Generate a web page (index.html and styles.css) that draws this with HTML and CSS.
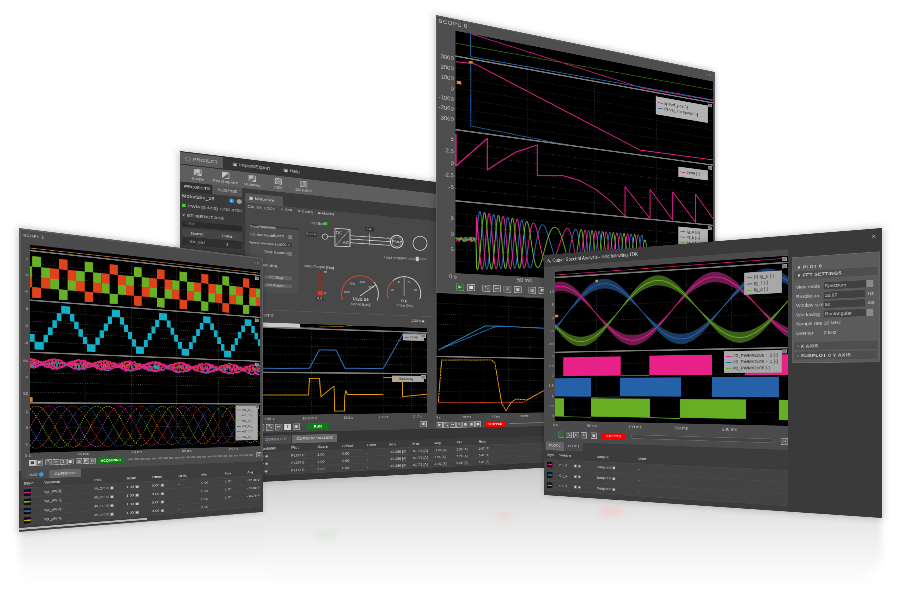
FILE: index.html
```html
<!DOCTYPE html>
<html lang="en">
<head>
<meta charset="utf-8">
<title>Scope windows</title>
<link rel="stylesheet" href="styles.css">
</head>
<body>
<main class="desk">
  <div class="glow"><div class="rf rf-a"></div><div class="rf rf-b"></div><div class="rf rf-d"></div><b class="spot spot-red1"></b><b class="spot spot-red2"></b><b class="spot spot-green"></b></div>

  <!-- back window: main application -->
  <section class="win win-b" data-quad="180,151 560,197 560,467 180,486">
    <nav class="b-menu"><span class="on">◯ PROJECT</span><span>▣ Import/Export</span><span>▣ Help</span></nav>
    <div class="b-ribbon">
      <span>▦<i>Scope</i></span><span>◩<i>Plot Graphics</i></span><span>▤<i>Variables</i></span><span>▧<i>CSV</i></span><span>▥<i>DB Editor</i></span>
    </div>
    <div class="b-body">
      <aside class="b-side">
        <div class="b-sidetabs"><span class="on">PROJECTS</span><span>SCOPES</span></div>
        <div class="b-proj"><b>MotorSim_18</b><em class="dot-i">i</em><em class="dot-g"></em></div>
        <div class="b-proj small"><em class="led"></em>PWM (0:42:0) <u>CNX a700</u></div>
        <div class="b-proj small">∨ ETHERNET ABS</div>
        <div class="b-filter">Filter</div>
        <div class="b-th"><span>Name</span><span>Data</span></div>
        <div class="b-th dark"><span>Xa_ctrl</span><span>1</span></div>
      </aside>
      <div class="b-main">
        <div class="b-tabs"><span>▣ MotorSim</span></div>
        <div class="b-tools"><span>CAL NK_LOOK</span><span>✓ Edit</span><span>⚙ Config</span><span>▶ Monitor</span></div>
        <div class="b-cols">
          <div class="b-left">
            <div class="b-control" data-plot="bc"><svg></svg></div>
            <div class="b-plottitle"><span>PLOT 0</span><span class="tiny">1:20.5 ▣</span></div>
            <div class="plots">
              <div class="row"><div class="yax"></div><div class="canvas" data-plot="b0"><svg></svg></div></div>
              <div class="row"><div class="yax"><i>20</i><i>10</i><i>0</i></div><div class="canvas" data-plot="b1"><svg></svg>
                <div class="legend lg-b1"><p><s class="c-blue"></s>Dem</p></div><b class="mini"></b></div></div>
              <div class="row"><div class="yax"><i>5</i><i>0</i><i>-5</i></div><div class="canvas" data-plot="b2"><svg></svg>
                <div class="legend lg-b2"><p><s class="c-amber"></s>Est.mag</p></div><b class="mini"></b></div></div>
            </div>
            <div class="axis"><span>13.08 s</span><span>13.505 s</span><span>13.6 s</span><span>13.8 s</span><span>14.0 s</span></div>
            <div class="tools"><b class="btn">▣</b><b class="btn">⤡</b><b class="btn">↔</b><b class="btn on">↕</b><b class="btn">▣</b><span class="st st-go">RUN</span><span class="grow"></span><b class="btn">▣</b></div>
          </div>
          <div class="b-right">
            <div class="plots">
              <div class="row"><div class="yax"></div><div class="canvas" data-plot="b3"><svg></svg></div></div>
              <div class="row"><div class="yax"></div><div class="canvas" data-plot="b4"><svg></svg></div></div>
            </div>
            <div class="axis"><span>4 s</span><span>20 ms</span><span>40 ms</span><span>60 ms</span><span>1 s</span></div>
            <div class="tools"><b class="btn">▶</b><b class="btn">⤡</b><b class="btn">↔</b><b class="btn">↕</b><b class="btn">▣</b><b class="btn">▣</b><b class="btn">▣</b><span class="st st-stop">STOPPED</span><span class="track"></span></div>
          </div>
        </div>
        <div class="b-table">
          <div class="tabs"><span>CONSOLE</span><span class="on">CURSOR VALUES</span></div>
          <div class="t-row head"><span>Variable</span><span>Plot</span><span>Scale</span><span>Offset</span><span>Units</span><span>Min</span><span>Max</span><span>Avg</span><span>Cur</span><span>Rms</span></div>
          <div class="t-row"><span>Ia ◉</span><span>PLOT 0</span><span>1.00</span><span>0.00</span><span>-</span><span>-10.286 [A]</span><span>10.771 [A]</span><span>-1.06 [A]</span><span>5.26 [A]</span><span>5.47 [A]</span></div>
          <div class="t-row"><span>Ib ◉</span><span>PLOT 0</span><span>1.00</span><span>0.00</span><span>-</span><span>-10.286 [A]</span><span>10.771 [A]</span><span>1.06 [A]</span><span>5.26 [A]</span><span>5.47 [A]</span></div>
          <div class="t-row"><span>Ic ◉</span><span>PLOT 0</span><span>1.00</span><span>0.00</span><span>-</span><span>-10.286 [A]</span><span>10.771 [A]</span><span>-0.01 [A]</span><span>5.26 [A]</span><span>5.47 [A]</span></div>
        </div>
      </div>
    </div>
  </section>

  <!-- top window: SCOPE 0 -->
  <section class="win win-c" data-quad="436,15 715,72 715,304 436,293">
    <header class="title">SCOPE 0<span class="winbtn">▫ ×</span></header>
    <div class="plots">
      <div class="row"><div class="yax"></div><div class="canvas" data-plot="c0"><svg></svg></div></div>
      <div class="row"><div class="yax tall y-c1"><i>3000</i><i>2000</i><i>1000</i><i>0</i><i>-1000</i><i>-2000</i><i>-3000</i></div><div class="canvas" data-plot="c1"><svg></svg>
        <div class="legend lg-c1"><p><s class="c-pink"></s>speed_pos [-]</p><p><s class="c-blue"></s>(f) Vel_lim speed [-]</p></div><b class="mini"></b></div></div>
      <div class="row"><div class="yax tall y-c2"><i>5</i><i>2.5</i><i>0</i><i>-2.5</i><i>-5</i></div><div class="canvas" data-plot="c2"><svg></svg>
        <div class="legend lg-c2"><p><s class="c-pink"></s>theta [-]</p></div><b class="mini"></b></div></div>
      <div class="row"><div class="yax tall y-c3"><i>5</i><i>0</i><i>-5</i></div><div class="canvas" data-plot="c3"><svg></svg>
        <div class="legend lg-c3"><p><s class="c-pink"></s>Ig_a [A]</p><p><s class="c-blue"></s>Ig_b [A]</p><p><s class="c-green"></s>Ig_c [A]</p></div><b class="mini"></b></div></div>
    </div>
    <div class="axis c-axis"><span>0 s</span><span>50 ms</span><span>100 ms</span></div>
    <div class="tools c-tools"><b class="btn gr">▶</b><b class="btn">■</b><b class="gap"></b><b class="btn">⤡</b><b class="btn">↔</b><b class="btn">↕</b><b class="btn">▣</b><b class="gap"></b><b class="btn">▥</b><b class="btn">◩</b></div>
  </section>

  <!-- left window: SCOPE 1 -->
  <section class="win win-a" data-quad="19,228 263,258 263,512 19,532">
    <header class="title">SCOPE 1<span class="winbtn">▫ ×</span></header>
    <div class="plots">
      <div class="row"><div class="yax"></div><div class="canvas" data-plot="a0"><svg></svg></div></div>
      <div class="row"><div class="yax"><i>1</i><i>0</i><i>-1</i></div><div class="canvas" data-plot="a1"><svg></svg><b class="mini"></b></div></div>
      <div class="row"><div class="yax"><i>5</i><i>0</i><i>-5</i></div><div class="canvas" data-plot="a2"><svg></svg><b class="mini"></b></div></div>
      <div class="row"><div class="yax"><i>50</i><i>0</i><i>-50</i></div><div class="canvas" data-plot="a3"><svg></svg><b class="mini"></b></div></div>
      <div class="row"><div class="yax"><i>1</i><i>0</i><i>-1</i></div><div class="canvas" data-plot="a4"><svg></svg>
        <div class="legend lg-a4"><p><s class="c-pink"></s>xe1_0 [-]</p><p><s class="c-amber"></s>xe1_1 [-]</p><p><s class="c-green"></s>xe1_2 [-]</p><p><s class="c-blue"></s>xe2_0 [-]</p><p><s class="c-red"></s>xe2_1 [-]</p><p><s class="c-purple"></s>xe2_2 [-]</p></div><b class="mini"></b></div></div>
    </div>
    <div class="axis a-axis"><span>0 s</span><span>20 ms</span><span>40 ms</span><span>60 ms</span><span>80 ms</span></div>
    <div class="tools a-tools"><b class="btn on">■</b><b class="btn">◩</b><b class="gap"></b><b class="btn">⤡</b><b class="btn">↔</b><b class="btn">↕</b><b class="btn">▣</b><b class="gap"></b><b class="btn">▥</b><b class="btn">◩</b><b class="btn">▤</b><span class="st st-run">ACQUIRING</span><span class="dash"></span><b class="btn">↥</b></div>
    <div class="a-table">
      <div class="tabs"><span>TIME <em class="dot-i">i</em></span><span class="on">CURSORS</span></div>
      <div class="t-row head"><span>Style</span><span>Variable</span><span>Plot</span><span>Scale</span><span>Offset</span><span>Units</span><span>Min</span><span>Max</span><span>Avg</span></div>
      <div class="t-row"><span><s class="swatch c-pink"></s></span><span>vp_ph[0]</span><span>PLOT 0 ▣</span><span>1.00 ▣</span><span>0.00 ▣</span><span>-</span><span>0.00</span><span>1.00</span><span>-12.3e-6</span></div>
      <div class="t-row"><span><s class="swatch c-green"></s></span><span>vp_ph[1]</span><span>PLOT 0 ▣</span><span>1.00 ▣</span><span>0.00 ▣</span><span>-</span><span>0.00</span><span>1.00</span><span>-32.5e-6</span></div>
      <div class="t-row"><span><s class="swatch c-blue"></s></span><span>vp_ph[2]</span><span>PLOT 0 ▣</span><span>1.00 ▣</span><span>0.00 ▣</span><span>-</span><span>0.00</span><span>1.00</span><span>-12.7e-6</span></div>
      <div class="t-row"><span><s class="swatch c-amber"></s></span><span>vp_ph[3]</span><span>PLOT 0 ▣</span><span>1.00 ▣</span><span>0.00 ▣</span><span>-</span><span>0.00</span><span></span><span></span></div>
      <div class="a-scroll"></div>
    </div>
  </section>

  <!-- right window: spectral analysis -->
  <section class="win win-d" data-quad="544,255 882,228 882,518 544,495">
    <div class="d-title"><svg class="logo" viewBox="0 0 12 12"><path d="M1 11 5 2l3 6 1-2 2 5" fill="none" stroke="#d9d9d9" stroke-width="1.4"/><path d="M1 11 5 2" stroke="#e23a3a" stroke-width="1.6"/></svg>Output Spectral Analysis - Grid following.TDK<span class="winbtn">×</span></div>
    <div class="d-cols">
      <div class="d-left">
        <div class="plots">
          <div class="row"><div class="yax"></div><div class="canvas" data-plot="d0"><svg></svg><b class="mini"></b></div></div>
          <div class="row"><div class="yax tall y-d1"><i>10</i><i>5</i><i>0</i><i>-5</i><i>-10</i></div><div class="canvas" data-plot="d1"><svg></svg>
            <div class="legend lg-d1"><p><s class="c-pink"></s>(f) Ig_0 [-]</p><p><s class="c-blue"></s>Ig_1 [-]</p><p><s class="c-green"></s>Ig_2 [-]</p></div><b class="mini"></b></div></div>
          <div class="row"><div class="yax tall y-d2"><i>3</i><i>2.5</i><i>2</i><i>1.5</i><i>1</i><i>0.5</i><i>0</i></div><div class="canvas" data-plot="d2"><svg></svg>
            <div class="legend lg-d2"><p><s class="c-pink"></s>#0_PWM#2c09 + 2 [-]</p><p><s class="c-blue"></s>#0_PWM#2c09 + 1 [-]</p><p><s class="c-green"></s>#0_PWM#2c09 [-]</p></div><b class="mini"></b></div></div>
        </div>
        <div class="axis d-axis"><span>0 s</span><span>50 ms</span><span>100 ms</span><span>150 ms</span><span>200 ms</span></div>
        <div class="tools d-tools"><b class="btn gr"></b><b class="btn">⤡</b><b class="btn">↔</b><b class="btn">↕</b><b class="gap"></b><b class="btn">▣</b><span class="st st-stop">STOPPED</span><span class="track long"></span><b class="btn">→</b></div>
        <div class="d-table">
          <div class="tabs"><span class="on">PLOT 0</span><span>PLOT 1</span></div>
          <div class="t-row head"><span>Style</span><span>Variable</span><span>Subplot</span><span>Units</span></div>
          <div class="t-row"><span><s class="swatch c-pink"></s></span><span>Ch_0 &nbsp; &nbsp; &nbsp; ▣ ◉</span><span>Subplot 0 ▣</span><span>-</span></div>
          <div class="t-row"><span><s class="swatch c-blue"></s></span><span>Ch_1 &nbsp; &nbsp; &nbsp; ▣ ◉</span><span>Subplot 0 ▣</span><span>-</span></div>
          <div class="t-row"><span><s class="swatch c-green"></s></span><span>Ch_2 &nbsp; &nbsp; &nbsp; ▣ ◉</span><span>Subplot 0 ▣</span><span>-</span></div>
        </div>
      </div>
      <aside class="d-panel">
        <div class="d-card">
          <div class="d-h">∨ PLOT 0</div>
          <div class="d-h sub">∨ FFT SETTINGS</div>
          <div class="d-f"><label>View mode</label><span class="fld sel">Spectrum</span></div>
          <div class="d-f"><label>Resolution</label><span class="fld">16.67</span><em>Hz</em></div>
          <div class="d-f"><label>Window size</label><span class="fld">50</span><em>ms</em></div>
          <div class="d-f"><label>Windowing</label><span class="fld sel">Rectangular</span></div>
          <div class="d-f"><label>Sample rate</label><span>10 MHz</span></div>
          <div class="d-f"><label>Overlap</label><span>2 kHz</span></div>
          <div class="d-h sub gapped">› X AXIS</div>
          <div class="d-h sub">› SUBPLOT 0 Y AXIS</div>
        </div>
      </aside>
    </div>
  </section>
</main>
<script src="app.js"></script>
</body>
</html>
```

FILE: styles.css
```css
* { box-sizing: border-box; margin: 0; padding: 0; }
html, body { background: #fff; }
body { width: 900px; height: 603px; overflow: hidden; font-family: "Liberation Sans", Arial, sans-serif; }
.desk { position: relative; width: 900px; height: 603px; overflow: hidden; }

/* floor reflection */
.glow { position: absolute; inset: 0; filter: blur(3px); }
.rf { position: absolute; inset: 0; }
.rf-a { clip-path: polygon(19px 530px, 263px 510px, 263px 590px, 19px 590px); background: linear-gradient(#e6e6e6 525px, #f1f1f1 550px, #fbfbfb 570px, #fff 585px); }
.rf-b { clip-path: polygon(263px 480px, 545px 467px, 545px 600px, 263px 600px); background: linear-gradient(#cfcfcf 478px, #e4e4e4 515px, #f5f5f5 555px, #fff 590px); }
.rf-d { clip-path: polygon(544px 493px, 882px 516px, 882px 560px, 850px 600px, 544px 600px); background: linear-gradient(#dcdcdc 500px, #ebebeb 530px, #f8f8f8 565px, #fff 590px); }
.spot { position: absolute; display: block; height: 7px; }
.spot-red1 { left: 498px; top: 513px; width: 12px; background: #ecd6d6; }
.spot-red2 { left: 600px; top: 507px; width: 22px; height: 9px; background: #f0d0d0; }
.spot-green { left: 315px; top: 531px; width: 22px; background: #dde8da; }

/* windows on the free canvas: flat layout, projected by data-quad */
.win { position: absolute; left: 0; top: 0; transform-origin: 0 0; color: #cfcfcf; font-size: 9px; overflow: hidden; box-shadow: 0 0 14px rgba(0,0,0,.3); filter: blur(.45px); }
.win-a { width: 500px; height: 620px; background: #4b4b4b; outline: 3px solid #5d5d5d; outline-offset: -3px; }
.win-b { width: 760px; height: 640px; background: #3a3a3a; display: flex; flex-direction: column; }
.win-c { width: 560px; height: 560px; background: #4e4e4e; outline: 2px solid #5a5a5a; outline-offset: -2px; }
.win-d { width: 700px; height: 560px; background: #3a3a3a; display: flex; flex-direction: column; }

.title { height: 28px; padding: 9px 0 0 7px; font-size: 8px; letter-spacing: .3px; color: #d5d5d5; display: flex; justify-content: space-between; }
.win-c .title { height: 24px; padding: 5px 0 0 4px; font-size: 10px; letter-spacing: 1px; }
.winbtn { color: #999; padding-right: 10px; font-size: 9px; letter-spacing: 0; }

/* plots */
.plots { display: grid; gap: 3px; }
.row { display: flex; min-height: 0; }
.yax { display: flex; flex-direction: column; justify-content: space-around; align-items: flex-end; padding-right: 3px; font-size: 8px; color: #c6c6c6; }
.yax i { font-style: normal; line-height: 1; }
.yax.tall { justify-content: space-between; }
.canvas { position: relative; flex: 1; background: #000; box-shadow: 0 3px 0 #7a7a7a; overflow: hidden; }
.row:last-child .canvas { box-shadow: none; }
.canvas svg, .b-control svg { display: block; width: 100%; height: 100%; }
.mini { position: absolute; right: 2px; top: 2px; width: 10px; height: 8px; background: #777; border: 1px solid #aaa; }

.win-a .plots { grid-template-rows: 11px 99px 104px 101px 101px; margin: 3px 7px 0 0; }
.win-a .yax { width: 19px; }
.win-c .plots { grid-template-rows: 50px 147px 142px 146px; margin-right: 5px; }
.win-c .yax { width: 33px; font-size: 10px; }
.y-c1 { padding: 0 3px 13px 0; }
.y-c2 { padding: 14px 3px 20px 0; }
.y-c3 { padding: 30px 3px 42px 0; }
.win-d .plots { grid-template-rows: 12px 170px 157px; }
.win-d .yax { width: 27px; font-size: 9px; }
.y-d1 { padding: 27px 3px 13px 0; }
.y-d2 { padding: 3px 3px 6px 0; }

/* legends */
.legend { position: absolute; background: #b2b2b2; color: #2c2c2c; font-size: 9px; padding: 3px 12px 2px 4px; border: 1px solid #999; overflow: hidden; }
.legend p { display: flex; align-items: center; gap: 3px; white-space: nowrap; line-height: 13px; }
.legend s { display: block; width: 11px; height: 2px; flex: none; }
.c-pink { background: #e91e8c; } .c-blue { background: #2568b4; } .c-green { background: #6ab023; }
.c-amber { background: #e8a000; } .c-red { background: #e0431c; } .c-purple { background: #8a5bb0; }
.lg-a4 { right: 6px; top: 2px; width: 53px; height: 84px; padding: 3px 1px 0 3px; font-size: 7px; background: #a9a9a9; }
.lg-a4 s { width: 8px; }
.lg-c1 { right: 12px; top: 7px; width: 120px; height: 42px; padding-top: 6px; }
.lg-c2 { right: 12px; top: 13px; width: 69px; height: 24px; padding-top: 4px; }
.lg-c3 { right: 12px; top: 9px; width: 69px; height: 46px; }
.lg-d1 { right: 12px; top: 14px; width: 73px; height: 46px; background: #a8a8a8; }
.lg-d2 { right: 12px; top: 3px; width: 114px; height: 46px; background: #a8a8a8; }
.lg-b1 { right: 6px; top: 3px; width: 44px; height: 14px; padding: 0 3px; background: #a8a8a8; font-size: 8px; }
.lg-b2 { right: 6px; top: 3px; width: 66px; height: 14px; padding: 0 3px; background: #a8a8a8; font-size: 8px; }
.lg-b1 p, .lg-b2 p { line-height: 12px; }
.lg-b1 s, .lg-b2 s { width: 8px; }

/* axis + toolbars */
.axis { display: flex; justify-content: space-between; font-size: 8px; color: #c4c4c4; }
.a-axis { height: 12px; padding: 1px 60px 0 10px; }
.c-axis { height: 16px; padding: 2px 250px 0 22px; font-size: 10px; }
.d-axis { height: 21px; padding: 5px 100px 0 22px; font-size: 9px; }
.tools { display: flex; align-items: center; gap: 1px; }
.btn { flex: none; display: flex; align-items: center; justify-content: center; width: 13px; height: 13px; border: 1px solid #b8b8b8; background: #5f5f5f; color: #ddd; font-size: 8px; font-weight: 400; font-family: "DejaVu Sans", sans-serif; line-height: 1; }
.btn.on { background: #d5d5d5; color: #444; }
.btn.gr { border-color: #4caf50; background: #3f5f42; color: #9fdc9f; }
.gap { flex: none; width: 8px; }
.grow { flex: 1; }
.st { flex: none; display: flex; align-items: center; justify-content: center; font-size: 7px; font-weight: 700; color: #fff; }
.st-run { width: 52px; height: 13px; margin: 0 7px 0 2px; background: #0c7d12; }
.st-go { width: 40px; height: 12px; margin-left: 10px; background: #0c7d12; }
.st-stop { width: 46px; height: 13px; margin-left: 8px; background: #f40000; }
.dash { flex: 1; height: 4px; margin-right: 5px; background: repeating-linear-gradient(90deg, #777 0 9px, #4b4b4b 9px 12px); }
.track { flex: 1; height: 2px; margin: 0 8px; background: #777; }
.track.long { height: 9px; background: #444; border: 1px solid #6a6a6a; border-radius: 4px; }
.a-tools { height: 18px; padding-left: 17px; padding-right: 4px; }
.a-tools .btn { width: 12px; height: 12px; }
.a-tools .gap { width: 2px; }
.c-tools { height: 24px; padding-left: 34px; gap: 5px; }
.c-tools .btn { width: 14px; height: 14px; }
.c-tools .gap { width: 3px; }
.d-tools { height: 21px; padding-left: 36px; gap: 4px; }
.d-tools .btn { width: 14px; height: 14px; }
.d-tools .gap { width: 2px; }
.d-tools .st-stop { width: 56px; height: 14px; margin-left: 7px; }

/* tabular parts */
.tabs { display: flex; gap: 1px; font-size: 8px; }
.tabs span { padding: 4px 9px; background: #4a4a4a; color: #bbb; border-radius: 2px 2px 0 0; }
.tabs .on { background: #666; color: #e2e2e2; }
.t-row { display: grid; align-items: center; font-size: 8px; white-space: nowrap; color: #cfcfcf; border-bottom: 1px solid #4a4a4a; }
.t-row.head { color: #e0e0e0; background: #454545; }
.swatch { display: block; width: 13px; height: 13px; border-style: solid; border-color: #111; border-width: 5px 1px; }
.a-table { margin-top: 7px; background: #3d3d3d; height: 123px; padding: 0 4px; position: relative; }
.a-table .t-row { grid-template-columns: 36px 92px 62px 52px 56px 50px 53px 53px 60px; height: 19px; padding-left: 4px; background: #424242; }
.a-table .t-row.head { height: 18px; background: #3d3d3d; }
.dot-i { display: inline-block; width: 9px; height: 9px; border-radius: 50%; background: #2f8fd8; color: #fff; font-size: 7px; text-align: center; line-height: 9px; font-style: normal; }
.dot-g { display: inline-block; width: 9px; height: 9px; border-radius: 50%; background: #999; }
.a-scroll { position: absolute; left: 0; bottom: 3px; width: 240px; height: 4px; background: #b5b5b5; }

/* back window */
.b-menu { height: 26px; flex: none; display: flex; align-items: center; gap: 8px; background: #333; font-size: 9px; color: #c4c4c4; }
.b-menu span { padding: 6px 8px; }
.b-menu .on { background: #5c5c5c; }
.b-ribbon { height: 32px; flex: none; display: flex; background: #5e5e5e; color: #c8c8c8; padding-left: 6px; }
.b-ribbon span { width: 46px; display: flex; flex-direction: column; align-items: center; font-family: "DejaVu Sans", sans-serif; font-size: 16px; line-height: 19px; }
.b-ribbon i { font: 7px/10px "Liberation Sans", sans-serif; white-space: nowrap; }
.b-body { flex: 1; display: flex; min-height: 0; }
.b-side { width: 106px; flex: none; padding: 0 3px; background: #3a3a3a; font-size: 8px; }
.b-sidetabs { display: flex; height: 18px; }
.b-sidetabs span { flex: 1; text-align: center; line-height: 18px; background: #555; }
.b-sidetabs .on { background: #2f2f2f; color: #eee; }
.b-proj { display: flex; gap: 4px; align-items: center; height: 18px; white-space: nowrap; }
.b-proj b { font-weight: 400; font-size: 9px; margin-right: auto; color: #e2e2e2; }
.b-proj u { text-decoration: none; color: #bbb; }
.led { width: 6px; height: 6px; background: #46c83c; }
.b-filter { height: 11px; margin: 3px 0; padding-left: 6px; background: #2b2b2b; color: #777; font-size: 7px; }
.b-th { display: grid; grid-template-columns: 1fr 1fr; height: 16px; align-items: center; background: #444; text-align: center; }
.b-th.dark { background: #2f2f2f; }
.b-main { flex: 1; min-width: 0; padding: 9px 0 0 3px; display: flex; flex-direction: column; background: #3a3a3a; }
.b-tabs { height: 19px; display: flex; }
.b-tabs span { padding: 5px 16px 0 6px; background: #565656; color: #ddd; font-size: 8px; }
.b-tools { height: 14px; display: flex; gap: 10px; padding-left: 4px; font-size: 7px; color: #c4c4c4; background: #484848; align-items: center; }
.b-cols { display: flex; flex: none; height: 442px; background: #484848; }
.b-left { width: 358px; display: flex; flex-direction: column; flex: none; }
.b-control { height: 196px; flex: none; }
.b-plottitle { display: flex; justify-content: space-between; height: 26px; padding: 6px 16px 0 22px; font-size: 8px; border-top: 1px solid #5a5a5a; }
.tiny { font-size: 7px; }
.b-left .plots { grid-template-rows: 8px 87px 84px; }
.b-left .yax { width: 21px; font-size: 7px; }
.b-left .plots, .b-left .axis, .b-left .tools { margin-right: 12px; }
.b-left .axis { height: 16px; padding: 4px 10px 0 28px; font-size: 7px; }
.b-left .tools { height: 16px; padding-left: 20px; gap: 3px; }
.b-right { flex: 1; padding-top: 143px; }
.b-right .plots { grid-template-rows: 139px 125px; }
.b-right .yax { width: 9px; }
.b-right .axis { height: 16px; padding: 4px 20px 0 8px; font-size: 7px; }
.b-right .tools { height: 16px; padding-left: 9px; }
.b-table { flex: 1; padding-top: 6px; background: #353535; }
.b-table .tabs { padding-left: 26px; height: 17px; }
.b-table .tabs span { padding: 3px 8px; }
.b-table .t-row { grid-template-columns: 55px 48px 47px 48px 45px 47px 46px 48px 49px 60px; height: 15px; padding-left: 26px; background: #424242; font-size: 7px; }
.b-table .t-row.head { height: 17px; background: #3b3b3b; font-size: 8px; }

/* right window */
.d-title { height: 28px; flex: none; display: flex; align-items: center; gap: 4px; padding-left: 6px; color: #d9d9d9; font-size: 10px; }
.logo { width: 11px; height: 11px; }
.d-title .winbtn { margin-left: auto; color: #aaa; font-size: 15px; }
.d-cols { flex: 1; display: flex; min-height: 0; }
.d-left { width: 531px; flex: none; background: #4b4b4b; padding-top: 13px; display: flex; flex-direction: column; }
.d-table { margin-top: 7px; flex: 1; background: #3c3c3c; }
.d-table .tabs { height: 20px; padding-left: 4px; }
.d-table .t-row { grid-template-columns: 30px 90px 95px 60px; height: 24px; padding-left: 8px; background: #434343; }
.d-table .t-row.head { height: 22px; background: #3c3c3c; }
.d-panel { flex: 1; padding: 17px 4px 0 7px; }
.d-card { height: 214px; background: #5b5b5b; padding: 12px 3px 4px; border: 1px solid #707070; }
.d-h { height: 16px; font-size: 9px; font-weight: 700; letter-spacing: .6px; padding: 3px 0 0 6px; color: #d0d0d0; white-space: nowrap; }
.d-h.sub { background: #4e4e4e; margin-bottom: 3px; }
.d-h.sub:nth-child(2) { margin-bottom: 7px; }
.d-h.gapped { margin-top: 9px; }
.d-f { display: flex; align-items: center; height: 18.5px; font-size: 9px; padding-left: 4px; white-space: nowrap; }
.d-f label { width: 51px; flex: none; }
.fld { width: 74px; height: 14px; background: #404040; padding-left: 2px; line-height: 14px; }
.fld.sel { width: 88px; background: linear-gradient(90deg, #404040 76px, #8a8a8a 76px); }
.d-f em { font-style: normal; margin-left: 4px; }
```

FILE: app.js
```js
/* Projects each flat window on its quad, then draws its curves. Points are traced in reference pixels and mapped back through the projection. */
function projection(win) {
  const W = win.offsetWidth, H = win.offsetHeight;
  const q = win.dataset.quad.split(' ').map(s => s.split(',').map(Number));
  const [[x0, y0], [x1, y1], [x2, y2], [x3, y3]] = q;
  const dx1 = x1 - x2, dx2 = x3 - x2, sx = x0 - x1 + x2 - x3;
  const dy1 = y1 - y2, dy2 = y3 - y2, sy = y0 - y1 + y2 - y3;
  const den = dx1 * dy2 - dx2 * dy1;
  const g = (sx * dy2 - dx2 * sy) / den, h = (dx1 * sy - sx * dy1) / den;
  const a = x1 - x0 + g * x1, b = x3 - x0 + h * x3, d = y1 - y0 + g * y1, e = y3 - y0 + h * y3;
  win.style.transform = `matrix3d(${a / W},${d / W},0,${g / W},${b / H},${e / H},0,${h / H},0,0,1,0,${x0},${y0},0,1)`;
  win.inv = (x, y) => {
    const A = a - g * x, B = b - h * x, C = x - x0, D = d - g * y, E = e - h * y, F = y - y0;
    const det = A * E - B * D;
    return [W * (C * E - B * F) / det, H * (A * F - C * D) / det];
  };
}
document.querySelectorAll('.win').forEach(projection);

const NS = 'http://www.w3.org/2000/svg';
function chart(id, bx, by) {
  const box = document.querySelector(`[data-plot="${id}"]`);
  const win = box.closest('.win'), svg = box.querySelector('svg');
  let ox = 0, oy = 0, el = box;
  while (el !== win) { ox += el.offsetLeft; oy += el.offsetTop; el = el.offsetParent; }
  svg.setAttribute('viewBox', `${ox} ${oy} ${box.offsetWidth} ${box.offsetHeight}`);
  svg.setAttribute('preserveAspectRatio', 'none');
  const add = (tag, attrs, txt) => {
    const n = document.createElementNS(NS, tag);
    for (const k in attrs) n.setAttribute(k, attrs[k]);
    if (txt) n.textContent = txt;
    svg.appendChild(n);
    return n;
  };
  const c = {
    ox, oy, w: box.offsetWidth, h: box.offsetHeight, add,
    p: (x, y) => win.inv(bx + x / 3, by + y / 3),
    flat(pts, color, width = 1.2, dash) {
      const attrs = { points: pts.map(q => q[0].toFixed(1) + ',' + q[1].toFixed(1)).join(' '), fill: 'none', stroke: color, 'stroke-width': width, 'stroke-linejoin': 'round' };
      if (dash) attrs['stroke-dasharray'] = dash;
      return add('polyline', attrs);
    },
    line(pts, color, width, dash) { return c.flat(pts.map(q => c.p(q[0], q[1])), color, width, dash); },
    fill(pts, color) { return add('polygon', { points: pts.map(q => q[0].toFixed(1) + ',' + q[1].toFixed(1)).join(' '), fill: color }); },
    rect(x0, y0, x1, y1, color) {
      const a = c.p(x0, y0), b = c.p(x1, y1);
      return add('rect', { x: a[0], y: a[1], width: b[0] - a[0], height: b[1] - a[1], fill: color });
    },
    text(x, y, str, size = 8, color = '#cfcfcf', anchor = 'middle') {
      const q = c.p(x, y);
      return add('text', { x: q[0], y: q[1], 'font-size': size, fill: color, 'text-anchor': anchor, 'font-family': 'Liberation Sans, sans-serif' }, str);
    },
    grid(vx, hn, color = '#575757') {
      vx.forEach(x => { const X = c.p(x, 300)[0]; c.flat([[X, oy], [X, oy + c.h]], color, 1.2, '1.5 3'); });
      for (let i = 1; i <= hn; i++) { const Y = oy + c.h * i / (hn + 1); c.flat([[ox, Y], [ox + c.w, Y]], color, 1.2, '1.5 3'); }
    }
  };
  return c;
}
let seed = 7;
const rnd = () => { seed = (seed * 1664525 + 1013904223) % 4294967296; return seed / 4294967296; };
const PINK = '#e91e8c', BLUE = '#2568b4', GREEN = '#6ab023', AMBER = '#e8a000', RED = '#e0431c', CYAN = '#13b1c9', PURPLE = '#8a5bb0';

/* ---- SCOPE 1 (zoom base 0,220) ---- */
(function () {
  const a0 = chart('a0', 0, 220);
  a0.line([[90, 73], [785, 150]], PINK, 1.2);
  a0.line([[90, 84], [785, 160]], '#c98a2c', 1.2);

  const a1 = chart('a1', 0, 220);
  a1.grid([255, 395, 530, 655], 3);
  const x0 = a1.p(96, 150)[0], x4 = a1.p(667, 150)[0], col = (x4 - x0) / 24;
  const yT = a1.p(96, 108)[1], rh = (a1.p(96, 232)[1] - yT) / 4;
  const green = [0, 1, 2, 3, 2, 1], red = [3, 2, 1, 0, 1, 2];
  for (let i = -1; i < 32; i++) {
    const k = ((i % 6) + 6) % 6, x = x0 + i * col;
    a1.add('rect', { x, y: yT + green[k] * rh, width: col, height: rh + .5, fill: GREEN });
    a1.add('rect', { x, y: yT + red[k] * rh, width: col, height: rh + .5, fill: RED });
  }

  const a2 = chart('a2', 0, 220);
  a2.grid([255, 395, 530, 655], 4);
  const v0 = a2.p(110, 370)[0], v4 = a2.p(678, 370)[0], cw = (v4 - v0) / 48;
  const yt = a2.p(190, 258)[1], ch = (a2.p(110, 388)[1] - yt) / 6;
  const lv = [0, 0, 1, 2, 3, 4, 5, 5, 4, 3, 2, 1];
  for (let i = -2; i < 60; i++) {
    const k = ((i + 1) % 12 + 12) % 12;
    a2.add('rect', { x: v0 + i * cw - cw / 2, y: yt + (5 - lv[(k + 11) % 12]) * ch, width: cw + .4, height: ch + .4, fill: CYAN });
  }

  const a3 = chart('a3', 0, 220);
  a3.grid([255, 395, 530, 655], 4);
  [[CYAN, 0], [CYAN, 1], [RED, 0], [RED, -1], [PINK, 1], [PINK, -1], [PINK, 0], [PINK, 1], [PINK, -1]].forEach(([col, s]) => {
    const pts = [];
    for (let x = 90; x < 786; x += 3) {
      const env = 2 + 11 * Math.abs(Math.sin((x - 125) / 24));
      const off = s === 0 ? (rnd() * 2 - 1) * env : s * env + (rnd() - .5) * 8;
      pts.push([x, 430 + (x - 90) * .028 + off]);
    }
    a3.line(pts, col, 1.6);
  });
  a3.rect(90, 532, 98, 545, '#e8811a');

  const a4 = chart('a4', 0, 220);
  a4.grid([255, 395, 530, 655], 3, '#4a4a4a');
  const top = a4.oy + 5, amp = (a4.h - 14) / 2, mid = top + amp;
  [PINK, AMBER, GREEN, BLUE, RED, PURPLE].forEach((col, n) => {
    const pts = [];
    for (let X = a4.ox; X <= a4.ox + a4.w; X += 1.5) pts.push([X, mid - amp * Math.sin((X - a4.ox) / 132 * 2 * Math.PI + n * Math.PI / 3)]);
    a4.flat(pts, col, 1.2, '3 2');
  });
})();

/* ---- SCOPE 0 (zoom base 430,10) ---- */
(function () {
  const c0 = chart('c0', 430, 10);
  c0.line([[78, 100], [850, 240]], '#2f6a12', 1.5);
  c0.line([[125, 72], [640, 235], [850, 272]], '#c2187a', 1.8);
  c0.line([[122, 72], [122, 140], [850, 270]], BLUE, 1.8);

  const c1 = chart('c1', 430, 10);
  c1.grid([292, 493, 680], 6, '#444');
  c1.line([[122, 160], [122, 348], [850, 490]], BLUE, 2, '3 1');
  c1.line([[78, 155], [135, 162], [630, 420], [850, 450]], PINK, 2);
  c1.rect(116, 152, 128, 160, '#f08a1e');
  c1.rect(80, 212, 94, 224, '#f08a1e');

  const c2 = chart('c2', 430, 10);
  c2.grid([292, 493, 680], 5, '#444');
  const curve = [[78, 372], [78, 468], [172, 385], [172, 480], [210, 455], [260, 425], [322, 405], [322, 497], [400, 497], [450, 512], [500, 540], [545, 577], [585, 618], [585, 530], [660, 625], [660, 538], [728, 630], [728, 546], [797, 637], [797, 553], [850, 627]];
  c2.line(curve, PINK, 2);

  const c3 = chart('c3', 430, 10);
  c3.grid([292, 493, 680], 5, '#444');
  [BLUE, PINK, GREEN].forEach((col, n) => {
    const noise = [];
    for (let x = 78; x < 140; x += 3) noise.push([x, 688 + (rnd() - .5) * 14]);
    const pts = noise;
    let ph = n * 2 * Math.PI / 3;
    for (let x = 140; x < 660; x += 1) {
      const period = x < 280 ? 42 : x < 380 ? 42 + (x - 280) * .9 : x < 460 ? 132 - (x - 380) * 1.25 : 32;
      ph += 2 * Math.PI / period;
      const amp = x < 380 ? 88 - (x - 140) * .12 : x < 640 ? 60 : 60 - (x - 640) * 2.5;
      pts.push([x, 685 + .09 * (x - 78) - amp * Math.sin(ph)]);
    }
    c3.line(pts, col, 1.8);
  });
})();

/* ---- main application (zoom bases 170,140 and 260,300) ---- */
(function () {
  const g = chart('bc', 170, 140);
  const W = '#d4d4d4';
  // form box
  g.rect(240, 252, 385, 462, '#4e4e4e');
  g.rect(240, 252, 385, 270, '#3a3a3a');
  g.rect(270, 256, 315, 269, '#606060');
  g.text(254, 263, 'Comp', 6);
  g.text(292, 265, 'Parameters', 6);
  g.text(277, 288, 'Control mode', 7);
  g.text(325, 291, 'Speed', 7);
  g.rect(355, 285, 366, 298, '#808080');
  g.text(287, 314, 'Speed reference [rpm]', 6);
  g.rect(333, 308, 366, 322, '#3a3a3a');
  g.text(345, 318, '100.0', 7);
  g.text(322, 342, 'Total Harmonic', 7);
  g.rect(355, 335, 366, 348, '#777');
  g.text(300, 380, 'Winding', 7);
  g.rect(283, 405, 365, 421, '#636363');
  g.text(318, 416, 'DC Stop', 7);
  g.rect(283, 430, 365, 445, '#636363');
  g.text(316, 440, 'Fix Power', 7);
  // circuit
  g.text(444, 254, 'DC Bus', 7);
  g.rect(462, 246, 472, 256, '#35c43a');
  g.rect(408, 275, 440, 291, '#2e2e2e');
  g.text(424, 286, '500 V', 7);
  const circle = (cx, cy, r, col, w) => {
    const pts = [];
    for (let i = 0; i <= 48; i++) pts.push([cx + r * Math.cos(i * Math.PI / 24), cy + r * Math.sin(i * Math.PI / 24)]);
    g.line(pts, col, w);
  };
  circle(465, 290, 8, W, 1.2);
  g.line([[473, 290], [495, 290]], W, 1);
  g.line([[495, 265], [540, 268], [540, 320], [495, 318], [495, 265]], W, 1.6);
  g.line([[497, 316], [538, 270]], W, 1);
  g.text(507, 282, 'DC', 9, W);
  g.text(528, 312, 'AC', 9, W);
  [287, 297, 308].forEach(y => g.line([[540, y], [660, y + 8]], W, 1.4));
  g.line([[598, 280], [598, 316]], W, 1.2);
  g.rect(585, 260, 612, 275, '#2e2e2e');
  g.text(597, 271, '0 A', 7);
  circle(680, 305, 19, W, 2);
  circle(680, 305, 14, W, 1);
  g.text(680, 309, 'PMM', 8, W);
  circle(750, 310, 21, W, 1.6);
  g.text(670, 357, 'Load torque', 7);
  g.text(700, 358, '0 Nm', 7);
  g.line([[715, 357], [770, 357]], '#8a8a8a', 2);
  g.rect(737, 350, 746, 364, '#cfcfcf');
  // bar
  g.text(448, 384, 'Main Torque [Nm]', 7);
  g.rect(443, 390, 458, 465, '#6a3a35');
  g.rect(443, 453, 458, 465, '#e0382a');
  g.text(466, 399, '80', 6);
  g.text(466, 462, '0', 6);
  g.rect(438, 470, 460, 482, '#2e2e2e');
  g.text(449, 479, '0.0', 7);
  // gauges
  const arc = (cx, cy, r, from, to, col, w) => {
    const pts = [];
    for (let i = 0; i <= 40; i++) { const t = from + (to - from) * i / 40; pts.push([cx + r * Math.cos(t), cy - r * Math.sin(t)]); }
    g.line(pts, col, w);
  };
  const R = Math.PI / 180;
  arc(570, 462, 55, 200 * R, 40 * R, '#d6492f', 1.8);
  arc(570, 462, 55, 40 * R, -20 * R, W, 1.8);
  g.line([[570, 468], [617, 435]], W, 1.6);
  ['1000', '2000', '3000', '4000'].forEach((s, i) => { const t = (170 - i * 45) * R; g.text(570 + 40 * Math.cos(t), 465 - 38 * Math.sin(t), s, 5); });
  g.text(571, 482, '1020.54', 9, '#e8e8e8');
  g.text(572, 496, 'Speed [rpm]', 7);
  arc(702, 460, 50, 200 * R, 130 * R, '#d6492f', 1.8);
  arc(702, 460, 50, 130 * R, -20 * R, W, 1.8);
  g.line([[702, 468], [702, 412]], W, 1.4);
  ['20', '40', '60', '80'].forEach((s, i) => { const t = (165 - i * 50) * R; g.text(702 + 36 * Math.cos(t), 462 - 36 * Math.sin(t), s, 5); });
  g.text(703, 487, '0.0', 9, '#e8e8e8');
  g.text(703, 500, 'Torque [Nm]', 7);

  const b0 = chart('b0', 260, 300);
  b0.rect(0, 55, 120, 90, '#c9c9c9');
  b0.line([[120, 82], [230, 80], [300, 75], [500, 72]], AMBER, 1);
  const b1 = chart('b1', 260, 300);
  b1.grid([155, 258, 370, 455], 4, '#4a4a4a');
  b1.line([[0, 205], [148, 205], [178, 150], [228, 150], [255, 205], [370, 205], [430, 100], [505, 100]], '#2a6fbb', 2);
  const b2 = chart('b2', 260, 300);
  b2.grid([155, 258, 370, 455], 4, '#4a4a4a');
  b2.line([[0, 285], [146, 285], [148, 235], [178, 235], [183, 290], [222, 258], [224, 333], [253, 333], [255, 283], [258, 272], [262, 283], [370, 283]], AMBER, 1.8);
  b2.line([[370, 233], [427, 233], [428, 290], [505, 282]], AMBER, 1.8);

  const b3 = chart('b3', 260, 300);
  b3.grid([600, 675, 745, 810], 5, '#4a4a4a');
  b3.line([[535, 150], [675, 78], [710, 78], [860, 85]], '#17a5bf', 1.8);
  b3.line([[535, 150], [700, 82], [720, 78], [860, 85]], '#2a6fbb', 1.8);
  const b4 = chart('b4', 260, 300);
  b4.grid([600, 675, 745, 810], 4, '#4a4a4a');
  b4.line([[535, 307], [790, 307], [855, 270]], RED, 1.7, '5 1');
  b4.line([[535, 305], [545, 180], [695, 180], [705, 190], [725, 310], [738, 332], [755, 305], [770, 297], [800, 300], [855, 270]], AMBER, 2, '6 1');
})();

/* ---- spectral analysis (zoom base 540,225) ---- */
(function () {
  const d0 = chart('d0', 540, 225);
  d0.line([[45, 150], [738, 100]], PINK, 1.2);
  d0.line([[45, 156], [738, 112]], GREEN, 1.2);

  const d1 = chart('d1', 540, 225);
  d1.grid([170, 300, 440, 575], 4, '#4f4f4f');
  const Xp = d1.p(190, 262)[0], per = d1.p(680, 250)[0] - Xp;
  const Yc = d1.p(190, 262)[1], A = Yc - d1.p(190, 176)[1], env = A * .17;
  const curves = [[Xp - per / 3.3, PINK, '#6e1c4f'], [Xp, BLUE, '#1c3a60'], [Xp + per * .35, GREEN, '#3d5f1a']];
  const mids = [];
  curves.forEach(([X0, col, band]) => {
    const hi = [], lo = [], mid = [];
    for (let X = d1.ox; X <= d1.ox + d1.w; X += 3) {
      const s = Math.cos((X - X0) / per * 2 * Math.PI);
      hi.push([X, Yc - (A + env) * s]); lo.unshift([X, Yc - (A - env) * s]); mid.push([X, Yc - A * s]);
    }
    d1.fill(hi.concat(lo), band);
    mids.push([mid, col]);
  });
  mids.forEach(([pts, col]) => d1.flat(pts, col, 1.8));
  const mk = d1.p(170, 168); d1.add('rect', { x: mk[0] - 3, y: mk[1] - 3, width: 6, height: 6, fill: '#f08a1e' });
  const mk2 = d1.p(50, 273); d1.add('rect', { x: mk2[0] - 5, y: mk2[1] - 3, width: 9, height: 6, fill: '#f08a1e' });

  const d2 = chart('d2', 540, 225);
  d2.grid([170, 300, 440, 575], 5, '#333');
  [[70, 397, 242, 452], [328, 392, 516, 450], [615, 390, 745, 450]].forEach(r => d2.rect(...r, '#e82088'));
  [[30, 460, 153, 515], [240, 458, 423, 515], [516, 456, 717, 517]].forEach(r => d2.rect(...r, '#2461a8'));
  [[30, 520, 72, 575], [153, 520, 330, 578], [420, 522, 618, 582], [717, 525, 745, 586]].forEach(r => d2.rect(...r, '#66ae24'));
  d2.line([[242, 452], [328, 452]], PINK, 1.4);
  d2.line([[153, 517], [240, 516]], BLUE, 1.4);
  d2.line([[72, 575], [153, 577]], GREEN, 1.4);
  d2.line([[330, 578], [420, 581]], GREEN, 1.4);
})();
```
